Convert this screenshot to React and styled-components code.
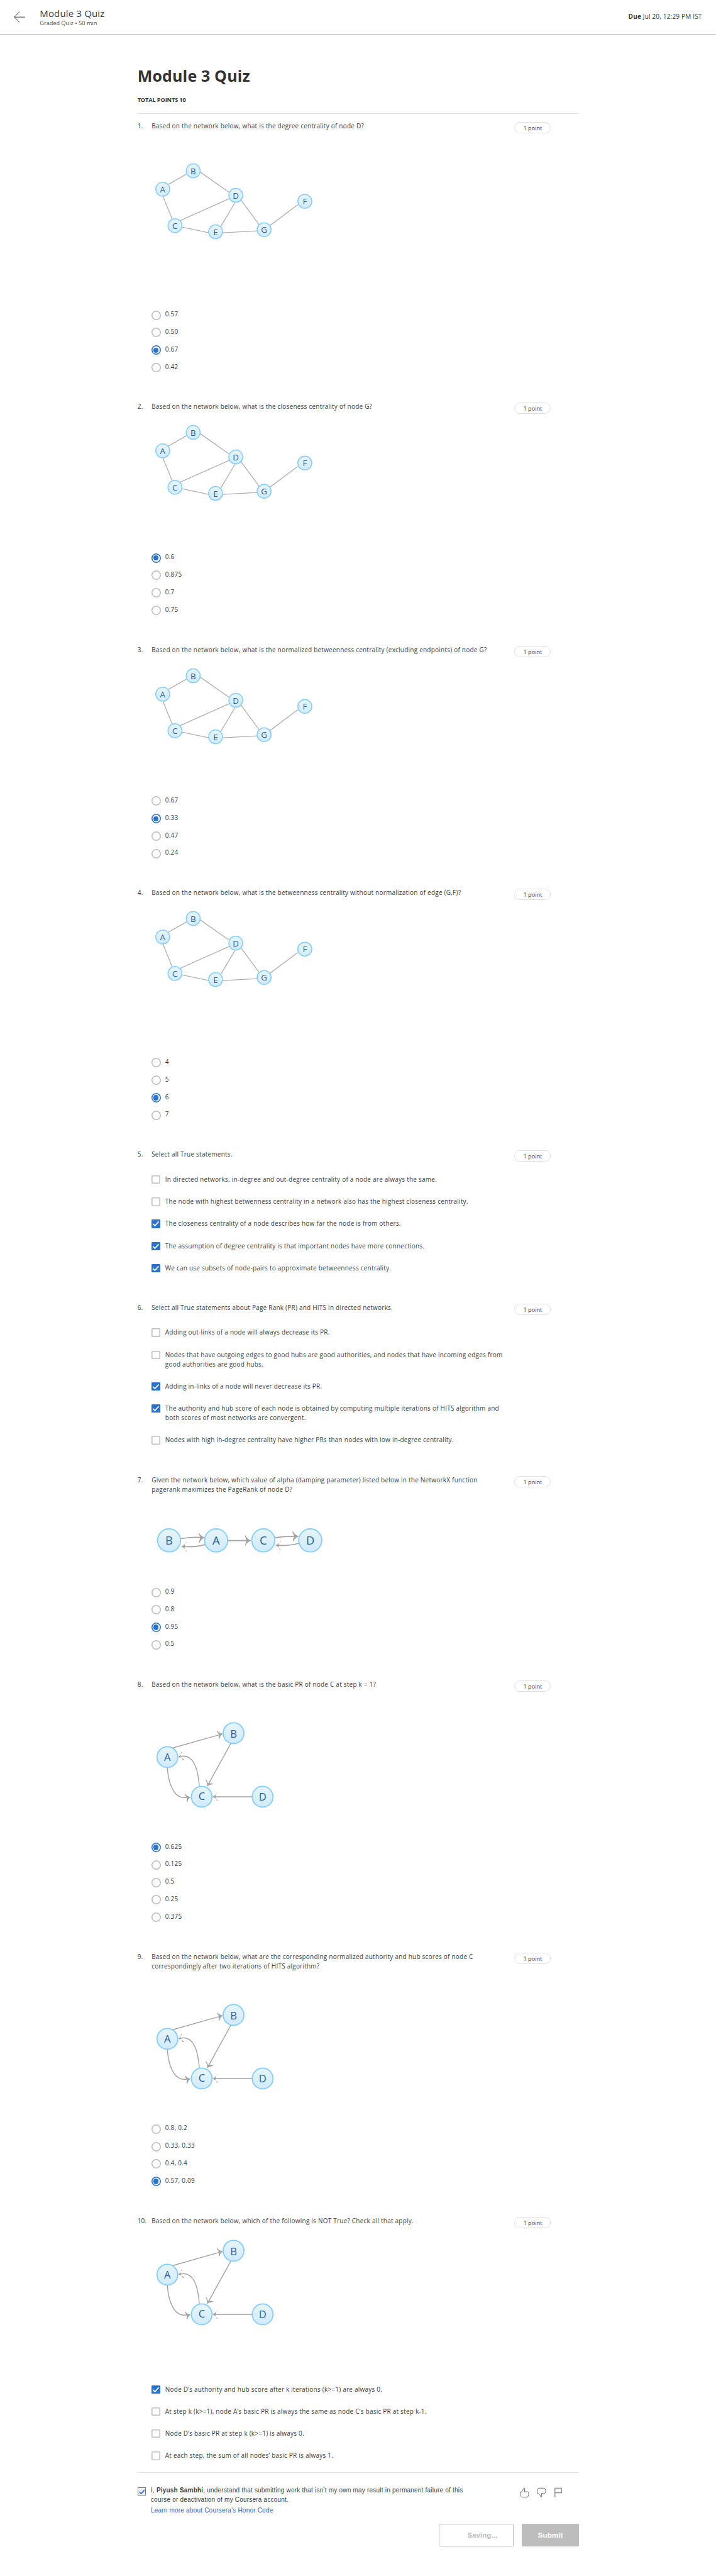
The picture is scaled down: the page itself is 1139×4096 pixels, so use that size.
import React from "react";
import styled, { createGlobalStyle, css } from "styled-components";

/* 1rem is ten design pixels; the whole sheet scales with the root size. */
const Global = createGlobalStyle`
  html { font-size: 8.3305px; }
  *, *::before, *::after { box-sizing: border-box; }
  body {
    margin: 0;
    background: #fff;
    color: #373a3c;
    font-family: "Open Sans", "Noto Sans", sans-serif;
    font-size: 1.2rem;
    line-height: 1.8rem;
    -webkit-text-size-adjust: none;
  }
  h1, h2, p { margin: 0; font-weight: 400; }
`;

const Page = styled.div`
  width: 100%;
  height: 491.6rem;
  overflow: hidden;
`;

const Header = styled.header`
  display: flex;
  align-items: center;
  height: 6.6rem;
  padding: 0 2.7rem;
  border-bottom: 1px solid #bdbdbd;
`;

const BackIcon = styled.svg`
  width: 2.2rem;
  height: 2.2rem;
  margin-right: 2.7rem;
  fill: none;
  stroke: #373a3c;
  stroke-width: 1.2;
`;

const HeaderText = styled.div`
  flex: 1;
`;

const HeaderTitle = styled.div`
  font-size: 1.8rem;
  line-height: 2.4rem;
  letter-spacing: 0.02rem;
`;

const HeaderMeta = styled.div`
  font-size: 1.1rem;
  line-height: 1.5rem;
  color: #4a4d50;
`;

const Due = styled.div`
  font-size: 1.2rem;
  letter-spacing: 0.023rem;
`;

const Main = styled.main`
  width: 84.3rem;
  margin-left: 26.25rem;
  padding-top: 5.7rem;
`;

const Title = styled.h1`
  height: 5.9rem;
  font-size: 3rem;
  line-height: 4.4rem;
  font-weight: 700;
  letter-spacing: 0.02rem;
  color: #333;
`;

const Total = styled.div`
  height: 3.4rem;
  font-size: 1.1rem;
  line-height: 1.7rem;
  font-weight: 700;
  letter-spacing: -0.012rem;
  color: #333;
`;

const Rule = styled.div`
  height: 1px;
  background: #e1e1e1;
`;

const Questions = styled.div`
  padding-top: 1.48rem;
  letter-spacing: 0.028rem;
`;

const Question = styled.section`
  display: flex;
  height: ${(p) => p.$h}rem;
`;

const Number = styled.div`
  width: 2.7rem;
  flex: none;
`;

const Content = styled.div`
  width: 69.3rem;
  flex: none;
`;

const Stage = styled.div`
  height: ${(p) => p.$h}rem;
`;

const Prompt = styled.p`
  width: 67.6rem;
`;

const Pill = styled.div`
  width: 6.95rem;
  height: 2.2rem;
  margin-top: 0.1rem;
  flex: none;
  border: 1px solid #e1e1e1;
  border-radius: 1.1rem;
  font-size: 1.1rem;
  line-height: 2.2rem;
  letter-spacing: 0;
  text-align: center;
`;

const Figure = styled.svg`
  display: block;
  width: ${(p) => p.$w / 10}rem;
  height: ${(p) => p.$h / 10}rem;
  margin-top: ${(p) => p.$gap}rem;
  font-family: "Open Sans", "Noto Sans", sans-serif;
  letter-spacing: 0;
`;

const Option = styled.div`
  display: flex;
  align-items: flex-start;
  width: 67.6rem;
  padding-bottom: ${(p) => (p.$multi ? 2.43 : 1.533)}rem;
`;

const OptionText = styled.div`
  margin-left: 0.85rem;
`;

const Radio = styled.span`
  display: flex;
  align-items: center;
  justify-content: center;
  flex: none;
  width: 1.8rem;
  height: 1.8rem;
  margin: 0.17rem 0 -0.17rem -0.05rem;
  border-radius: 50%;
  box-shadow: inset 0 0 0 0.19rem ${(p) => (p.$on ? "#2a73cc" : "#bdbdbd")};
  ${(p) =>
    p.$on &&
    css`
      &::after {
        content: "";
        width: 1rem;
        height: 1rem;
        border-radius: 50%;
        background: #2a73cc;
      }
    `}
`;

const Check = styled.span`
  display: flex;
  flex: none;
  width: 1.65rem;
  height: 1.6rem;
  margin: 0.13rem 0.1rem 0 0;
  border-radius: 0.2rem;
  box-shadow: inset 0 0 0 0.19rem ${(p) => (p.$on ? "#2a73cc" : "#bdbdbd")};
  background: ${(p) => (p.$on ? "#2a73cc" : "#fff")};
`;

const Tick = styled.svg`
  width: 100%;
  height: 100%;
  fill: none;
  stroke: #fff;
  stroke-width: 2;
`;

const Footer = styled.footer`
  font-family: "Liberation Sans", Arial, sans-serif;
`;

const Honor = styled.div`
  display: flex;
  padding-top: 2.6rem;
  height: 9.7rem;
`;

const HonorBox = styled.span`
  flex: none;
  width: 1.6rem;
  height: 1.6rem;
  margin-top: 0.15rem;
  border: 1px solid #767676;
  background: #efefef;
`;

const HonorText = styled.div`
  width: 61rem;
  margin-left: 0.95rem;
  line-height: 1.73rem;
  letter-spacing: 0.026rem;
  white-space: nowrap;
`;

const HonorLink = styled.a`
  display: block;
  margin-top: 0.3rem;
  color: #2a5fd0;
`;

const Feedback = styled.div`
  display: flex;
  gap: 1.3rem;
  margin: 0.2rem 0 0 9.35rem;
`;

const FeedbackIcon = styled.svg`
  width: 2rem;
  height: 2rem;
  fill: none;
  stroke: #55585b;
  stroke-width: 1.1;
  stroke-linejoin: round;
`;

const Actions = styled.div`
  display: flex;
  justify-content: flex-end;
  gap: 1.6rem;
`;

const Button = styled.button`
  width: ${(p) => p.$w}rem;
  height: 4.4rem;
  padding: 0 0 0 ${(p) => p.$indent || 0}rem;
  border: 1px solid #bdbdbd;
  border-radius: 0.2rem;
  background: ${(p) => (p.$solid ? "#bdbdbd" : "#fff")};
  color: ${(p) => (p.$solid ? "#fff" : "#bdbdbd")};
  font: 700 1.4rem "Liberation Sans", Arial, sans-serif;
`;

const EDGE = "#a3a3a3";

function Node({ x, y, r, label, size, dy }) {
  return (
    <g>
      <circle cx={x} cy={y} r={r} fill="url(#node)" stroke="#85cdfd" strokeWidth={r > 15 ? 2.2 : 1.8} />
      <text x={x} y={y + dy} fontSize={size} textAnchor="middle" fill="#2a6099">
        {label}
      </text>
    </g>
  );
}

function NodeGradient() {
  return (
    <defs>
      <linearGradient id="node" x1="0" y1="0" x2="0" y2="1">
        <stop offset="0" stopColor="#e6f5f9" />
        <stop offset="1" stopColor="#d0ebfc" />
      </linearGradient>
    </defs>
  );
}

const MESH_NODES = [
  ["A", 21.4, 55],
  ["B", 79.6, 20],
  ["C", 44.8, 124.7],
  ["D", 161, 66.7],
  ["E", 122.4, 136.3],
  ["F", 292.8, 78.3],
  ["G", 215.1, 132.3],
];

function Mesh({ gap }) {
  return (
    <Figure $w={320} $h={160} $gap={gap} viewBox="0 0 320 160">
      <NodeGradient />
      <path
        d="M31.4 46.3 66.7 26.3M93.5 22.7 147.6 60.7M21.7 68 39.4 112M54.4 115 149.2 72.7M58.1 127.3 109.6 138.3M132 126.7 159.4 80.7M171.2 76 205.4 122.7M135.8 138.3 202.8 134.7M225.8 124.7 279.4 84.7"
        fill="none"
        stroke="#b0b0b0"
        strokeWidth="1.6"
      />
      {MESH_NODES.map(([label, x, y]) => (
        <Node key={label} x={x} y={y} r={13.3} label={label} size={16} dy={6.1} />
      ))}
    </Figure>
  );
}

function Chain({ gap }) {
  return (
    <Figure $w={340} $h={70} $gap={gap} viewBox="0 0 340 70">
      <NodeGradient />
      {[["B", 33.5], ["A", 123.5], ["C", 213.5], ["D", 303.2]].map(([label, x]) => (
        <Node key={label} x={x} y={30.4} r={22} label={label} size={22} dy={8.2} />
      ))}
      <g fill="none" stroke={EDGE} strokeWidth="2">
        <path d="M56.5 27Q78 23.5 100 25M102 38.5Q82 44 58 42M146 30.7H188M236.5 25Q258 22 279 22.9M281 36Q262 41.5 238 39.7" />
      </g>
      <g fill={EDGE}>
        <path d="M90.5 15.5Q94 22 102 25Q94.5 28 91.5 35Q90.5 34.5 90.2 33.5L93.5 25L89.5 16.5Z" />
        <path d="M67.5 33Q64.5 39.5 56 42Q63.5 44.5 67.5 51.5Q66 52 65.5 50.5L63 42L66 33.5Z" />
        <path d="M179.5 21Q182.5 28 190.5 30.7Q182.5 33.5 179.5 40.5Q178.5 40 179 38.5L181.5 30.7L178.5 22Z" />
        <path d="M270 13Q273.5 20 281.5 22.9Q274 25.5 271 32.5Q269.5 32 270 30.5L272.5 22.5L269 14Z" />
        <path d="M247.5 30.5Q244 37.5 236 39.7Q243 42.5 246.5 49Q245 49.5 244.5 48L242.5 39.7L246 31Z" />
      </g>
    </Figure>
  );
}

function Cycle({ gap }) {
  return (
    <Figure $w={250} $h={180} $gap={gap} viewBox="0 0 250 180">
      <NodeGradient />
      <Node x={30.3} y={74.3} r={19.8} label="A" size={20} dy={7.8} />
      <Node x={156.7} y={28.7} r={19.8} label="B" size={20} dy={8.1} />
      <Node x={95.9} y={150} r={19.8} label="C" size={20} dy={5.9} />
      <Node x={212.2} y={150} r={19.8} label="D" size={20} dy={7.8} />
      <g fill="none" stroke={EDGE} strokeWidth="1.7">
        <path d="M41 56.7 134 30.5M151.3 48.7 107.5 128M192 150H119M91.3 129.3C90 112 86 72 60.5 72.4L53 73.8M30.3 94.7C32 122 42 155 66 151.3L73 150.9" />
      </g>
      <g fill={EDGE}>
        <path d="M125.5 23.5Q129 28.5 136.5 30Q131 33 130 39.5Q128.5 39 128.5 37.5L129.3 31.5L124.8 25Z" />
        <path d="M104 116.5Q107.5 120.5 107.5 124Q111 123.5 117.8 125Q117.5 126.5 116 126.5Q109.5 127 106 131Q107 124 103.5 118Z" />
        <path d="M126.5 141.5Q123.5 147.5 116 150Q123.5 152.5 126.5 158.5Q125 159 124.5 157.5L122 150L125 142.5Z" />
        <path d="M58 64Q57 70 50.8 74Q58 75 62.5 79.5Q61.5 80.8 60 80L55.5 74L56.5 65Z" />
        <path d="M64 144.5Q68 149.5 75 150.7Q69.5 153.5 68.5 160.5Q67 160 67 158.5L67.5 151.5L63.5 146Z" />
      </g>
    </Figure>
  );
}

const QUESTIONS = [
  {
    text: "Based on the network below, what is the degree centrality of node D?",
    height: 53.5, stage: 35.9, figure: <Mesh gap={5.57} />,
    options: ["0.57", "0.50", "0.67", "0.42"], picked: [2],
  },
  {
    text: "Based on the network below, what is the closeness centrality of node G?",
    height: 46.5, stage: 28.73, figure: <Mesh gap={2} />,
    options: ["0.6", "0.875", "0.7", "0.75"], picked: [0],
  },
  {
    text: "Based on the network below, what is the normalized betweenness centrality (excluding endpoints) of node G?",
    height: 46.3, stage: 28.67, figure: <Mesh gap={2} />,
    options: ["0.67", "0.33", "0.47", "0.24"], picked: [1],
  },
  {
    text: "Based on the network below, what is the betweenness centrality without normalization of edge (G,F)?",
    height: 49.91, stage: 32.3, figure: <Mesh gap={2} />,
    options: ["4", "5", "6", "7"], picked: [2],
  },
  {
    text: "Select all True statements.",
    height: 29.3, stage: 4.83, multi: true,
    options: [
      "In directed networks, in-degree and out-degree centrality of a node are always the same.",
      "The node with highest betwenness centrality in a network also has the highest closeness centrality.",
      "The closeness centrality of a node describes how far the node is from others.",
      "The assumption of degree centrality is that important nodes have more connections.",
      "We can use subsets of node-pairs to approximate betweenness centrality.",
    ],
    picked: [2, 3, 4],
  },
  {
    text: "Select all True statements about Page Rank (PR) and HITS in directed networks.",
    height: 32.9, stage: 4.75, multi: true,
    options: [
      "Adding out-links of a node will always decrease its PR.",
      "Nodes that have outgoing edges to good hubs are good authorities, and nodes that have incoming edges from good authorities are good hubs.",
      "Adding in-links of a node will never decrease its PR.",
      "The authority and hub score of each node is obtained by computing multiple iterations of HITS algorithm and both scores of most networks are convergent.",
      "Nodes with high in-degree centrality have higher PRs than nodes with low in-degree centrality.",
    ],
    picked: [2, 3],
  },
  {
    text: "Given the network below, which value of alpha (damping parameter) listed below in the NetworkX function pagerank maximizes the PageRank of node D?",
    height: 39, stage: 21.29, figure: <Chain gap={5.76} />,
    options: ["0.9", "0.8", "0.95", "0.5"], picked: [2],
  },
  {
    text: "Based on the network below, what is the basic PR of node C at step k = 1?",
    height: 52, stage: 30.96, figure: <Cycle gap={5.56} />,
    options: ["0.625", "0.125", "0.5", "0.25", "0.375"], picked: [0],
  },
  {
    text: "Based on the network below, what are the corresponding normalized authority and hub scores of node C correspondingly after two iterations of HITS algorithm?",
    height: 50.43, stage: 32.72, figure: <Cycle gap={5.56} />,
    options: ["0.8, 0.2", "0.33, 0.33", "0.4, 0.4", "0.57, 0.09"], picked: [3],
  },
  {
    text: "Based on the network below, which of the following is NOT True? Check all that apply.",
    height: 48.83, stage: 32.12, figure: <Cycle gap={1.95} />, multi: true,
    options: [
      "Node D’s authority and hub score after k iterations (k>=1) are always 0.",
      "At step k (k>=1), node A’s basic PR is always the same as node C’s basic PR at step k-1.",
      "Node D’s basic PR at step k (k>=1) is always 0.",
      "At each step, the sum of all nodes’ basic PR is always 1.",
    ],
    picked: [0],
  },
];

export default function App() {
  return (
    <Page>
      <Global />
      <Header>
        <BackIcon viewBox="0 0 22 22">
          <path d="M0.8 11H21.5M11 0.8 0.8 11 11 21.2" />
        </BackIcon>
        <HeaderText>
          <HeaderTitle>Module 3 Quiz</HeaderTitle>
          <HeaderMeta>Graded Quiz • 50 min</HeaderMeta>
        </HeaderText>
        <Due>
          <b>Due</b> Jul 20, 12:29 PM IST
        </Due>
      </Header>
      <Main>
        <Title>Module 3 Quiz</Title>
        <Total>TOTAL POINTS 10</Total>
        <Rule />
        <Questions>
          {QUESTIONS.map((q, i) => (
            <Question key={i} $h={q.height}>
              <Number>{i + 1}.</Number>
              <Content>
                <Stage $h={q.stage}>
                  <Prompt>{q.text}</Prompt>
                  {q.figure}
                </Stage>
                {q.options.map((option, n) => {
                  const on = q.picked.includes(n);
                  return (
                    <Option key={n} $multi={q.multi}>
                      {q.multi ? (
                        <Check $on={on}>
                          {on && (
                            <Tick viewBox="0 0 16 16">
                              <path d="M2.5 8.3 6.2 12 13.5 4" />
                            </Tick>
                          )}
                        </Check>
                      ) : (
                        <Radio $on={on} />
                      )}
                      <OptionText>{option}</OptionText>
                    </Option>
                  );
                })}
              </Content>
              <Pill>1 point</Pill>
            </Question>
          ))}
        </Questions>
        <Footer>
          <Rule />
          <Honor>
            <HonorBox>
              <svg viewBox="0 0 14 14" width="100%" height="100%" display="block">
                <path d="M2 6.5 5.5 9.5 12 2.5V6L6 12.5 2 9.5Z" fill="#2a6fd6" />
              </svg>
            </HonorBox>
            <HonorText>
              <div>
                I, <b>Piyush Sambhi</b>, understand that submitting work that isn’t my own may result in permanent failure of this
              </div>
              <div>course or deactivation of my Coursera account.</div>
              <HonorLink>Learn more about Coursera’s Honor Code</HonorLink>
            </HonorText>
            <Feedback>
              <FeedbackIcon viewBox="0 0 20 20">
                <path d="M1.7 9.4C4.5 9.2 6 7 7 4.5L8.5 2C9.5 1 11 1.5 10.7 3L9.7 8.5H14.5C17 8.5 18.2 10 18.2 12.5C18.2 16 16.5 18.8 14 18.8H6C3.5 18.8 1.7 15 1.7 9.4Z" />
              </FeedbackIcon>
              <FeedbackIcon viewBox="0 0 20 20">
                <path d="M1.8 11.7C1.8 8 1.5 5 4.5 1.5H13.5C16.5 1.5 18.2 4 18.2 7C18.2 10 17 11.7 14 11.7H10.2L10.7 17C10.7 18.5 9.5 19 8.7 18L7 15C6 13 4.5 11.7 1.8 11.7Z" />
              </FeedbackIcon>
              <FeedbackIcon viewBox="0 0 20 20">
                <path d="M2.2 19V1.5H14.7V10.5H2.2" />
              </FeedbackIcon>
            </Feedback>
          </Honor>
          <Actions>
            <Button $w={14.3} $indent={2.4}>Saving...</Button>
            <Button $w={10.9} $solid>Submit</Button>
          </Actions>
        </Footer>
      </Main>
    </Page>
  );
}
